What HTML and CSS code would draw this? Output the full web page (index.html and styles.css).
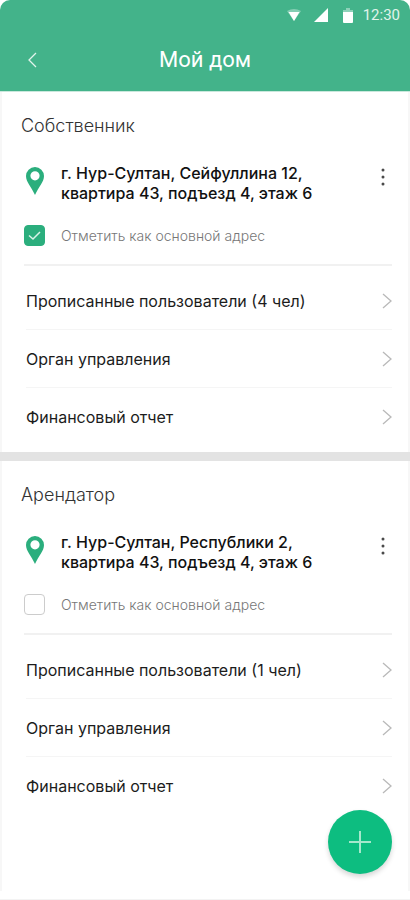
FILE: index.html
```html
<!DOCTYPE html>
<html lang="ru">
<head>
<meta charset="utf-8">
<meta name="viewport" content="width=device-width, initial-scale=1">
<title>Мой дом</title>
<link rel="stylesheet" href="styles.css">
</head>
<body>
<div class="app">
  <header class="header">
    <div class="status">
      <svg width="14" height="12" viewBox="0 0 14 12" aria-hidden="true"><path d="M0 2Q7-2 14 2L7 12Z" fill="#fff" opacity=".35"/><path d="M1.500 3H12.500L7 12Z" fill="#fff"/></svg>
      <svg class="signal" width="14" height="14" viewBox="0 0 14 14" aria-hidden="true"><path d="M14 0V14H0Z" fill="#fff"/></svg>
      <svg class="battery" width="10" height="15" viewBox="0 0 10 15" aria-hidden="true"><path d="M3 0H7V2H10V5H0V2H3Z" fill="#fff" opacity=".4"/><path d="M0 4H10V14Q10 15 9 15H1Q0 15 0 14Z" fill="#fff"/></svg>
      <span>12:30</span>
    </div>
    <div class="bar">
      <button class="back" type="button" aria-label="Назад"><svg width="9" height="16" viewBox="0 0 9 16"><path d="M8 1L1 8L8 15" fill="none" stroke="#e2f4ec" stroke-width="1.300"/></svg></button>
      <h1>Мой дом</h1>
    </div>
  </header>
  <main>
    <section class="home">
      <h2>Собственник</h2>
      <div class="address">
        <svg class="pin" width="18" height="28" viewBox="0 0 18 28" aria-hidden="true"><path d="M9 0A9 9 0 0 1 18 9C18 15 12.500 20 9 28C5.500 20 0 15 0 9A9 9 0 0 1 9 0ZM9 4.200A4.600 4.600 0 1 0 9 13.400A4.600 4.600 0 1 0 9 4.200Z" fill="#2bae7d" fill-rule="evenodd"/></svg>
        <p>г. Нур-Султан, Сейфуллина 12,<br>квартира 43, подъезд 4, этаж 6</p>
        <button class="more" type="button" aria-label="Ещё"><svg width="4" height="18" viewBox="0 0 4 18"><g fill="#4a4a4a"><circle cx="2" cy="2" r="1.500"/><circle cx="2" cy="9" r="1.500"/><circle cx="2" cy="16" r="1.500"/></g></svg></button>
      </div>
      <label class="primary"><input type="checkbox" checked><svg class="tick" width="21" height="21" viewBox="0 0 21 21" aria-hidden="true"><path d="M5 10.500L9 14L16 7" fill="none" stroke="#d9f3e8" stroke-width="1.500"/></svg><span>Отметить как основной адрес</span></label>
      <nav class="menu" aria-label="Собственник">
        <a href="#"><span>Прописанные пользователи (4 чел)</span><svg width="10" height="16" viewBox="0 0 10 16"><path d="M1 1L9 8L1 15"/></svg></a>
        <a href="#"><span>Орган управления</span><svg width="10" height="16" viewBox="0 0 10 16"><path d="M1 1L9 8L1 15"/></svg></a>
        <a href="#"><span>Финансовый отчет</span><svg width="10" height="16" viewBox="0 0 10 16"><path d="M1 1L9 8L1 15"/></svg></a>
      </nav>
    </section>
    <section class="home">
      <h2>Арендатор</h2>
      <div class="address">
        <svg class="pin" width="18" height="28" viewBox="0 0 18 28" aria-hidden="true"><path d="M9 0A9 9 0 0 1 18 9C18 15 12.500 20 9 28C5.500 20 0 15 0 9A9 9 0 0 1 9 0ZM9 4.200A4.600 4.600 0 1 0 9 13.400A4.600 4.600 0 1 0 9 4.200Z" fill="#2bae7d" fill-rule="evenodd"/></svg>
        <p>г. Нур-Султан, Республики 2,<br>квартира 43, подъезд 4, этаж 6</p>
        <button class="more" type="button" aria-label="Ещё"><svg width="4" height="18" viewBox="0 0 4 18"><g fill="#4a4a4a"><circle cx="2" cy="2" r="1.500"/><circle cx="2" cy="9" r="1.500"/><circle cx="2" cy="16" r="1.500"/></g></svg></button>
      </div>
      <label class="primary"><input type="checkbox"><svg class="tick" width="21" height="21" viewBox="0 0 21 21" aria-hidden="true"><path d="M5 10.500L9 14L16 7" fill="none" stroke="#d9f3e8" stroke-width="1.500"/></svg><span>Отметить как основной адрес</span></label>
      <nav class="menu" aria-label="Арендатор">
        <a href="#"><span>Прописанные пользователи (1 чел)</span><svg width="10" height="16" viewBox="0 0 10 16"><path d="M1 1L9 8L1 15"/></svg></a>
        <a href="#"><span>Орган управления</span><svg width="10" height="16" viewBox="0 0 10 16"><path d="M1 1L9 8L1 15"/></svg></a>
        <a href="#"><span>Финансовый отчет</span><svg width="10" height="16" viewBox="0 0 10 16"><path d="M1 1L9 8L1 15"/></svg></a>
      </nav>
    </section>
  </main>
  <button class="add" type="button" aria-label="Добавить"><svg width="22" height="22" viewBox="0 0 22 22"><path d="M11 0V22M0 11H22" stroke="#a5e8cc" stroke-width="2"/></svg></button>
</div>
</body>
</html>
```
FILE: styles.css
```css
* { box-sizing: border-box; }
body { margin: 0; background: #fff; color: #1c1c1c; font-family: Inter, "Liberation Sans", sans-serif; }
h1, h2, p { margin: 0; font-weight: 400; }
button { border: 0; padding: 0; background: none; cursor: pointer; }
svg { display: block; flex: none; }

.app { display: flex; flex-direction: column; min-height: 100vh; padding-bottom: 8px; border-bottom: 1px solid #f3f3f3; }
.header { height: 92px; background: #43b38a; border-bottom: 1px solid #c9e8dc; border-radius: 10px 10px 0 0; color: #fff; font-family: Roboto, sans-serif; }
.status { display: flex; align-items: center; justify-content: flex-end; height: 30px; padding-right: 10px; font-size: 15px; color: #e0f3eb; }
.signal { margin-left: 13px; }
.battery { margin: 0 10px 0 15px; }
.bar { display: grid; grid-template-columns: 64px 1fr 64px; align-items: center; height: 60px; }
.back { display: grid; place-items: center; height: 44px; }
h1 { text-align: center; font-size: 22px; line-height: 32px; }

main { flex: 1; box-shadow: inset 2px 0 #f7f7f7, inset -2px 0 #f7f7f7; }
.home { padding: 20px 18px 6px 21px; }
.home + .home { border-top: 9px solid #e3e3e3; }
h2 { font-size: 18px; line-height: 28px; font-weight: 300; color: #333; }
.address { display: grid; grid-template-columns: 40px 1fr 18px; margin-top: 23px; }
.pin { margin: 4px 0 0 5px; }
.address p { font-size: 16px; line-height: 20px; font-weight: 500; color: #111; }
.more { display: grid; place-items: center; align-self: start; height: 28px; }
.primary { display: grid; grid-template-columns: 40px 1fr; align-items: center; height: 24px; margin-top: 20px; font-size: 14px; font-weight: 300; color: #777; }
.primary input { grid-area: 1 / 1; appearance: none; width: 21px; height: 21px; margin: 0 0 0 3px; border: 1px solid #ccc; border-radius: 4px; background: #fff; }
.primary input:checked { border-color: #2bae7d; background: #2bae7d; }
.tick { grid-area: 1 / 1; margin-left: 3px; visibility: hidden; pointer-events: none; }
.primary input:checked + .tick { visibility: visible; }
.menu { margin: 17px 0 0 3px; padding-top: 6px; border-top: 2px solid #f1f1f1; }
.menu a { display: flex; align-items: center; justify-content: space-between; height: 58px; margin-left: 2px; border-bottom: 1px solid #f5f5f5; color: #1c1c1c; font-size: 16px; text-decoration: none; }
.menu a:last-child { border-bottom: 0; }
.menu path { fill: none; stroke: #b9b9b9; stroke-width: 1.300; }

.add { position: fixed; right: 18px; bottom: 26px; display: grid; place-items: center; width: 64px; height: 64px; border-radius: 50%; background: #0dbd80; box-shadow: 0 3px 5px rgba(0, 0, 0, .16); }
```
